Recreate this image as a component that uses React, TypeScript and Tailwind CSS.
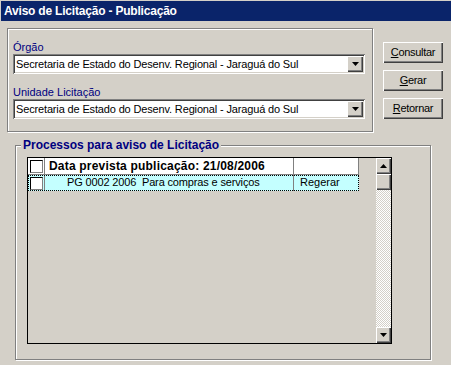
import React from "react";

const raised =
  "shadow-[inset_1px_1px_0_#ffffff,inset_-1px_-1px_0_#404040,inset_-2px_-2px_0_#808080]";
const sunken =
  "shadow-[inset_1px_1px_0_#808080,inset_-1px_-1px_0_#ffffff,inset_2px_2px_0_#404040,inset_-2px_-2px_0_#d4d0c8]";
const etched = "border border-[#808080] shadow-[1px_1px_0_#ffffff,inset_1px_1px_0_#ffffff]";

const Arrow = ({ up = false }: { up?: boolean }) => (
  <svg width="7" height="4" viewBox="0 0 7 4">
    {up ? <path d="M3.5 0 L7 4 L0 4 Z" fill="#000" /> : <path d="M0 0 L7 0 L3.5 4 Z" fill="#000" />}
  </svg>
);

const Combo = ({ value }: { value: string }) => (
  <div className={`flex h-[20px] w-[352px] items-center bg-white p-[2px] ${sunken}`}>
    <span className="flex-1 pl-[1px] leading-[14px] tracking-[-0.15px]">{value}</span>
    <div className={`flex h-[16px] w-[16px] items-center justify-center bg-[#d4d0c8] ${raised}`}>
      <Arrow />
    </div>
  </div>
);

const Btn = ({ first, rest }: { first: string; rest: string }) => (
  <div className={`flex h-[21px] w-[60px] items-center justify-center bg-[#d4d0c8] ${raised}`}>
    <span className="tracking-[-0.3px]">
      <span className="underline">{first}</span>
      {rest}
    </span>
  </div>
);

const Check = () => (
  <div className="ml-[2px] h-[13px] w-[13px] border border-t-black border-l-black border-r-[#808080] border-b-[#808080] bg-white" />
);

export default function App() {
  const orgao = "Secretaria de Estado do Desenv. Regional - Jaraguá do Sul";
  return (
    <div className="h-[365px] w-[451px] overflow-hidden bg-[#d4d0c8] font-['Liberation_Sans',Arial,sans-serif] text-[11px] text-black">
      {/* Title */}
      <div className="ml-[1px] mt-[1px] h-[20px] bg-[#0a246a] pl-[3px] text-[12px] font-bold leading-[20px] tracking-[-0.2px] text-white">
        Aviso de Licitação - Publicação
      </div>

      <div className="flex pl-[7px] pt-[7px]">
        {/* Filters */}
        <div className={`h-[104px] w-[366px] pl-[5px] pt-[11px] ${etched}`}>
          <div className="h-[14px] leading-[14px] text-[#000080]">Órgão</div>
          <Combo value={orgao} />
          <div className="mt-[11px] h-[14px] leading-[14px] text-[#000080]">Unidade Licitação</div>
          <Combo value={orgao} />
        </div>

        {/* Buttons */}
        <div className="ml-[10px] mt-[14px] flex flex-col gap-[7px]">
          <Btn first="C" rest="onsultar" />
          <Btn first="G" rest="erar" />
          <Btn first="R" rest="etornar" />
        </div>
      </div>

      {/* Processos */}
      <div className={`relative ml-[15px] mt-[13px] h-[215px] w-[416px] ${etched}`}>
        <span className="absolute left-[5px] top-[-9px] bg-[#d4d0c8] px-[2px] text-[12px] font-bold leading-[16px] text-[#000080]">
          Processos para aviso de Licitação
        </span>

        <div className="ml-[11px] mt-[11px] flex h-[187px] w-[365px] border border-black">
          <div className="w-[331px]">
            <div className="flex h-[17px] border-b border-[#808080] bg-white">
              <div className="flex w-[17px] items-center border-r border-[#808080]">
                <Check />
              </div>
              <div className="w-[249px] border-r border-[#808080] pl-[4px] text-[12px] font-bold leading-[16px] tracking-[0.2px]">
                Data prevista publicação: 21/08/2006
              </div>
              <div className="w-[65px] border-r border-[#808080]" />
            </div>
            <div className="flex h-[16px] bg-[#c4ffff] outline-1 -outline-offset-1 outline-dotted outline-black">
              <div className="flex w-[17px] items-center border-r border-[#808080]">
                <Check />
              </div>
              <div className="w-[249px] border-r border-[#808080] pl-[22px] leading-[15px] tracking-[-0.15px]">
                PG 0002 2006&nbsp;&nbsp;Para compras e serviços
              </div>
              <div className="w-[65px] pl-[6px] leading-[15px]">Regerar</div>
            </div>
          </div>
          <div className="flex-1" />
          <div className="flex w-[15px] flex-col">
            <div className={`flex h-[16px] items-center justify-center bg-[#d4d0c8] ${raised}`}>
              <Arrow up />
            </div>
            <div className={`h-[16px] bg-[#d4d0c8] ${raised}`} />
            <div className="flex-1 bg-[image:repeating-conic-gradient(#ffffff_0_25%,#d4d0c8_0_50%)] bg-[length:2px_2px]" />
            <div className={`flex h-[16px] items-center justify-center bg-[#d4d0c8] ${raised}`}>
              <Arrow />
            </div>
          </div>
        </div>
      </div>
    </div>
  );
}
